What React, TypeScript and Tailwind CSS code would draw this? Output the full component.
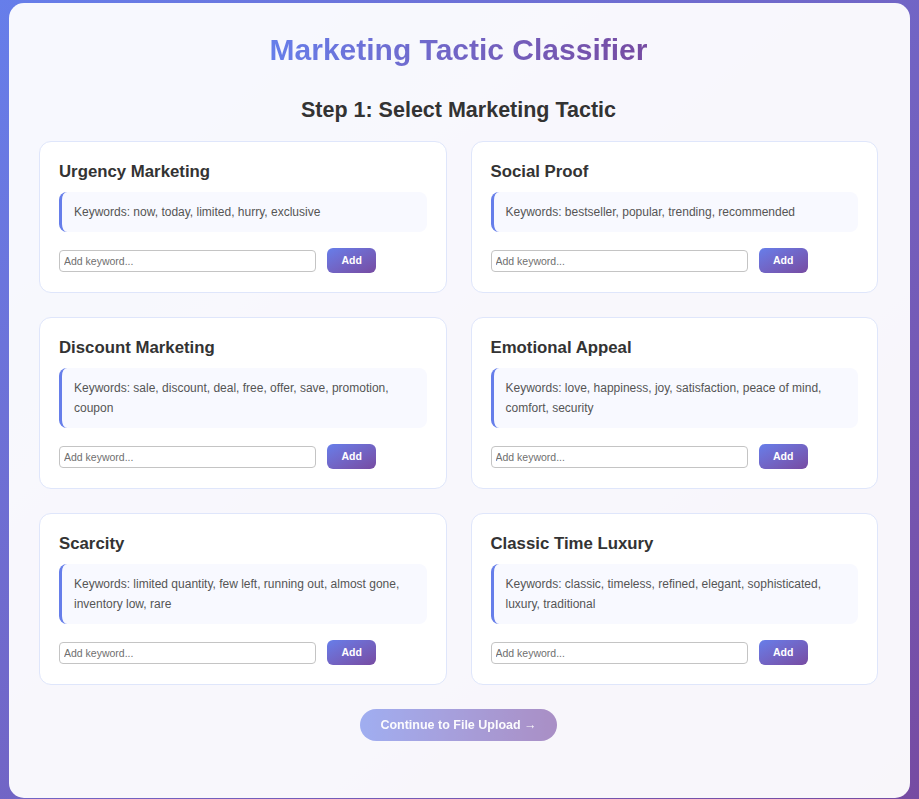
import React from "react";

const tactics = [
  { name: "Urgency Marketing", kw: "now, today, limited, hurry, exclusive" },
  { name: "Social Proof", kw: "bestseller, popular, trending, recommended" },
  { name: "Discount Marketing", kw: "sale, discount, deal, free, offer, save, promotion, coupon" },
  { name: "Emotional Appeal", kw: "love, happiness, joy, satisfaction, peace of mind, comfort, security" },
  { name: "Scarcity", kw: "limited quantity, few left, running out, almost gone, inventory low, rare" },
  { name: "Classic Time Luxury", kw: "classic, timeless, refined, elegant, sophisticated, luxury, traditional" },
];

function Card({ name, kw }: { name: string; kw: string }) {
  return (
    <div className="bg-white border border-[#dfe6fb] rounded-[12px] p-[19px]">
      <h3 className="text-[16.8px] font-bold text-[#333] leading-[21px] mb-[10px]">{name}</h3>
      <div className="bg-[#f8f9ff] border-l-[3px] border-[#667eea] rounded-[8px] pl-[12px] pr-[12px] py-[10px] text-[12px] leading-[20px] text-[#555]">
        Keywords: {kw}
      </div>
      <div className="flex items-center mt-[16px]">
        <input
          placeholder="Add keyword..."
          className="w-[70%] h-[22px] border border-[#c4c4c4] rounded-[4px] px-[4px] text-[10.5px] text-[#333] placeholder:text-[#6f6f6f] bg-white outline-none"
        />
        <button className="ml-[11px] w-[49px] h-[25px] rounded-[6px] bg-gradient-to-br from-[#667eea] to-[#764ba2] text-white text-[10.5px] font-bold">
          Add
        </button>
      </div>
    </div>
  );
}

export default function App() {
  return (
    <div
      className="min-h-[799px] h-[799px] overflow-hidden pt-[3px] pl-[9px] pr-[9px] bg-gradient-to-br from-[#667eea] to-[#764ba2]"
      style={{ fontFamily: '"Liberation Sans", Arial, sans-serif' }}
    >
      <div className="h-[795px] bg-white/95 rounded-[15px] pt-[29px] pl-[30px] pr-[32px]">
        <h1 className="text-center text-[30px] font-bold leading-[35px] bg-gradient-to-r from-[#667eea] to-[#764ba2] bg-clip-text text-transparent w-fit mx-auto">
          Marketing Tactic Classifier
        </h1>
        <h2 className="text-center text-[21.5px] font-bold text-[#333] leading-[26px] mt-[30px] mb-[18px]">
          Step 1: Select Marketing Tactic
        </h2>
        <div className="grid grid-cols-2 gap-x-[24px] gap-y-[24px]">
          {tactics.map((t) => (
            <Card key={t.name} name={t.name} kw={t.kw} />
          ))}
        </div>
        <div className="flex justify-center mt-[24px]">
          <button className="h-[32px] px-[20px] rounded-full bg-gradient-to-r from-[#667eea] to-[#764ba2] opacity-60 text-white text-[12.5px] font-bold">
            Continue to File Upload →
          </button>
        </div>
      </div>
    </div>
  );
}
